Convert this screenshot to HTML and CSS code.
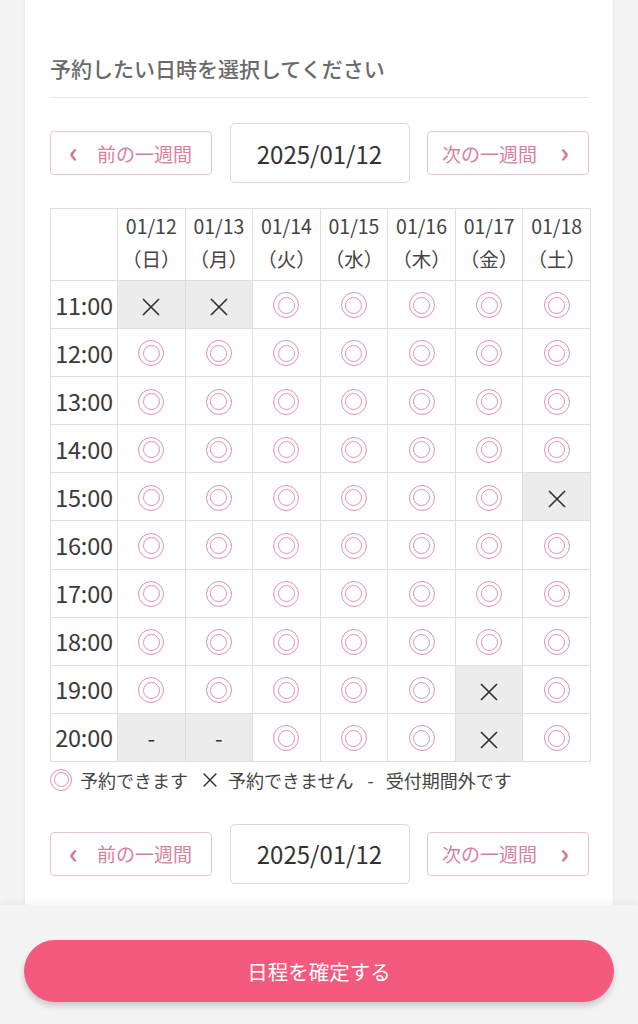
FILE: index.html
```html
<!DOCTYPE html>
<html lang="ja">
<head>
<meta charset="utf-8">
<link rel="stylesheet" href="styles.css">
</head>
<body>
<main class="card">
  <h2 class="title">予約したい日時を選択してください</h2>
  <div class="nav">
    <button class="wk prev"><span class="chev">‹</span><span>前の一週間</span></button>
    <div class="date">2025/01/12</div>
    <button class="wk next"><span>次の一週間</span><span class="chev">›</span></button>
  </div>
  <table class="grid">
    <colgroup><col class="c-time"><col><col><col><col><col><col><col></colgroup>
    <thead>
      <tr><th></th><th>01/12<br>（日）</th><th>01/13<br>（月）</th><th>01/14<br>（火）</th><th>01/15<br>（水）</th><th>01/16<br>（木）</th><th>01/17<br>（金）</th><th>01/18<br>（土）</th></tr>
    </thead>
    <tbody>
      <tr><td class="t">11:00</td><td class="off"><svg class="x" viewBox="0 0 20 20"><path d="M2 2L18 18M18 2L2 18"/></svg></td><td class="off"><svg class="x" viewBox="0 0 20 20"><path d="M2 2L18 18M18 2L2 18"/></svg></td><td><i class="ok"></i></td><td><i class="ok"></i></td><td><i class="ok"></i></td><td><i class="ok"></i></td><td><i class="ok"></i></td></tr>
      <tr><td class="t">12:00</td><td><i class="ok"></i></td><td><i class="ok"></i></td><td><i class="ok"></i></td><td><i class="ok"></i></td><td><i class="ok"></i></td><td><i class="ok"></i></td><td><i class="ok"></i></td></tr>
      <tr><td class="t">13:00</td><td><i class="ok"></i></td><td><i class="ok"></i></td><td><i class="ok"></i></td><td><i class="ok"></i></td><td><i class="ok"></i></td><td><i class="ok"></i></td><td><i class="ok"></i></td></tr>
      <tr><td class="t">14:00</td><td><i class="ok"></i></td><td><i class="ok"></i></td><td><i class="ok"></i></td><td><i class="ok"></i></td><td><i class="ok"></i></td><td><i class="ok"></i></td><td><i class="ok"></i></td></tr>
      <tr><td class="t">15:00</td><td><i class="ok"></i></td><td><i class="ok"></i></td><td><i class="ok"></i></td><td><i class="ok"></i></td><td><i class="ok"></i></td><td><i class="ok"></i></td><td class="off"><svg class="x" viewBox="0 0 20 20"><path d="M2 2L18 18M18 2L2 18"/></svg></td></tr>
      <tr><td class="t">16:00</td><td><i class="ok"></i></td><td><i class="ok"></i></td><td><i class="ok"></i></td><td><i class="ok"></i></td><td><i class="ok"></i></td><td><i class="ok"></i></td><td><i class="ok"></i></td></tr>
      <tr><td class="t">17:00</td><td><i class="ok"></i></td><td><i class="ok"></i></td><td><i class="ok"></i></td><td><i class="ok"></i></td><td><i class="ok"></i></td><td><i class="ok"></i></td><td><i class="ok"></i></td></tr>
      <tr><td class="t">18:00</td><td><i class="ok"></i></td><td><i class="ok"></i></td><td><i class="ok"></i></td><td><i class="ok"></i></td><td><i class="ok"></i></td><td><i class="ok"></i></td><td><i class="ok"></i></td></tr>
      <tr><td class="t">19:00</td><td><i class="ok"></i></td><td><i class="ok"></i></td><td><i class="ok"></i></td><td><i class="ok"></i></td><td><i class="ok"></i></td><td class="off"><svg class="x" viewBox="0 0 20 20"><path d="M2 2L18 18M18 2L2 18"/></svg></td><td><i class="ok"></i></td></tr>
      <tr><td class="t">20:00</td><td class="off dash">-</td><td class="off dash">-</td><td><i class="ok"></i></td><td><i class="ok"></i></td><td><i class="ok"></i></td><td class="off"><svg class="x" viewBox="0 0 20 20"><path d="M2 2L18 18M18 2L2 18"/></svg></td><td><i class="ok"></i></td></tr>
    </tbody>
  </table>
  <div class="legend">
    <i class="ok sm"></i><span>予約できます</span>
    <svg class="x lx" viewBox="0 0 20 20"><path d="M2 2L18 18M18 2L2 18"/></svg><span>予約できません</span>
    <span class="ld">-</span><span>受付期間外です</span>
  </div>
  <div class="nav nav2">
    <button class="wk prev"><span class="chev">‹</span><span>前の一週間</span></button>
    <div class="date">2025/01/12</div>
    <button class="wk next"><span>次の一週間</span><span class="chev">›</span></button>
  </div>
</main>
<footer class="foot">
  <button class="confirm">日程を確定する</button>
</footer>
</body>
</html>
```

FILE: styles.css
```css
* { box-sizing: border-box; }
html, body { margin: 0; padding: 0; }
body {
  width: 638px;
  height: 1024px;
  overflow: hidden;
  background: #f4f4f4;
  font-family: "Noto Sans CJK JP", "Noto Sans", sans-serif;
  color: #333;
}
.card {
  margin: 0 24px;
  width: 590px;
  height: 905px;
  background: #fff;
  padding: 53px 24px 0 25px;
  box-shadow: 0 0 2px rgba(0,0,0,0.06);
  border-left: 1px solid #ececec;
  border-right: 1px solid #ececec;
}
.title {
  margin: 0;
  font-size: 21px;
  line-height: 31px;
  font-weight: 500;
  color: #6a6a6a;
  padding-bottom: 13px;
  border-bottom: 1px solid #e6e6e6;
}
.nav {
  margin-top: 25px;
  display: flex;
  align-items: center;
  justify-content: space-between;
}
.wk {
  width: 162px;
  height: 44px;
  background: #fff;
  border: 1px solid #ecc3d0;
  border-radius: 4px;
  font-family: inherit;
  font-size: 19px;
  color: #d6819c;
  display: flex;
  align-items: center;
  padding: 0;
}
.prev { padding-left: 18px; gap: 19px; }
.next { padding-left: 14px; gap: 23px; }
.chev {
  font-size: 28px;
  font-weight: 700;
  line-height: 1;
  margin-top: -4px;
  color: #d47894;
}
.date {
  width: 180px;
  height: 60px;
  border: 1px solid #d9d9d9;
  border-radius: 5px;
  display: flex;
  align-items: center;
  justify-content: center;
  font-size: 24px;
  color: #333;
}
.grid {
  margin-top: 25px;
  width: 541px;
  border-collapse: collapse;
  table-layout: fixed;
}
.c-time { width: 67px; }
.grid th, .grid td {
  border: 1px solid #dedede;
  text-align: center;
  padding: 0;
}
.grid th {
  height: 72px;
  font-size: 19.5px;
  font-weight: 400;
  line-height: 33px;
  color: #444;
  vertical-align: top;
}
.grid td {
  height: 48.1px;
  vertical-align: middle;
}
.grid td.t {
  font-size: 23.5px;
  color: #3a3a3a;
  letter-spacing: -0.2px;
}
.grid td.off { background: #ececec; }
.grid td.dash { font-size: 22px; color: #333; }
.ok {
  display: inline-flex;
  align-items: center;
  justify-content: center;
  width: 26px;
  height: 26px;
  border: 1.5px solid #db93aa;
  border-radius: 50%;
  vertical-align: middle;
}
.ok::after {
  content: "";
  width: 15px;
  height: 15px;
  border: 1.5px solid #db93aa;
  border-radius: 50%;
}
.x {
  width: 20px;
  height: 20px;
  vertical-align: middle;
  stroke: #333;
  stroke-width: 1.7;
  fill: none;
}
.legend {
  margin-top: 6px;
  height: 24px;
  display: flex;
  align-items: center;
  font-size: 18px;
  color: #444;
}
.legend .sm { width: 22px; height: 22px; margin-right: 8px; }
.legend .sm::after { width: 13px; height: 13px; }
.legend .lx { width: 16px; height: 16px; margin: 0 10px 0 14px; stroke-width: 1.8; }
.legend .ld { margin: 0 12px 0 14px; }
.nav2 { margin-top: 32px; }
.foot {
  height: 119px;
  background: #f4f4f4;
  box-shadow: 0 -3px 6px rgba(0,0,0,0.04);
  padding-top: 35px;
  position: relative;
}
.confirm {
  display: block;
  margin: 0 24px;
  width: 590px;
  height: 62px;
  border: none;
  border-radius: 31px;
  background: #f45a7e;
  color: #fff;
  font-family: inherit;
  font-size: 20.5px;
  box-shadow: 0 4px 6px rgba(0,0,0,0.18);
}
```
